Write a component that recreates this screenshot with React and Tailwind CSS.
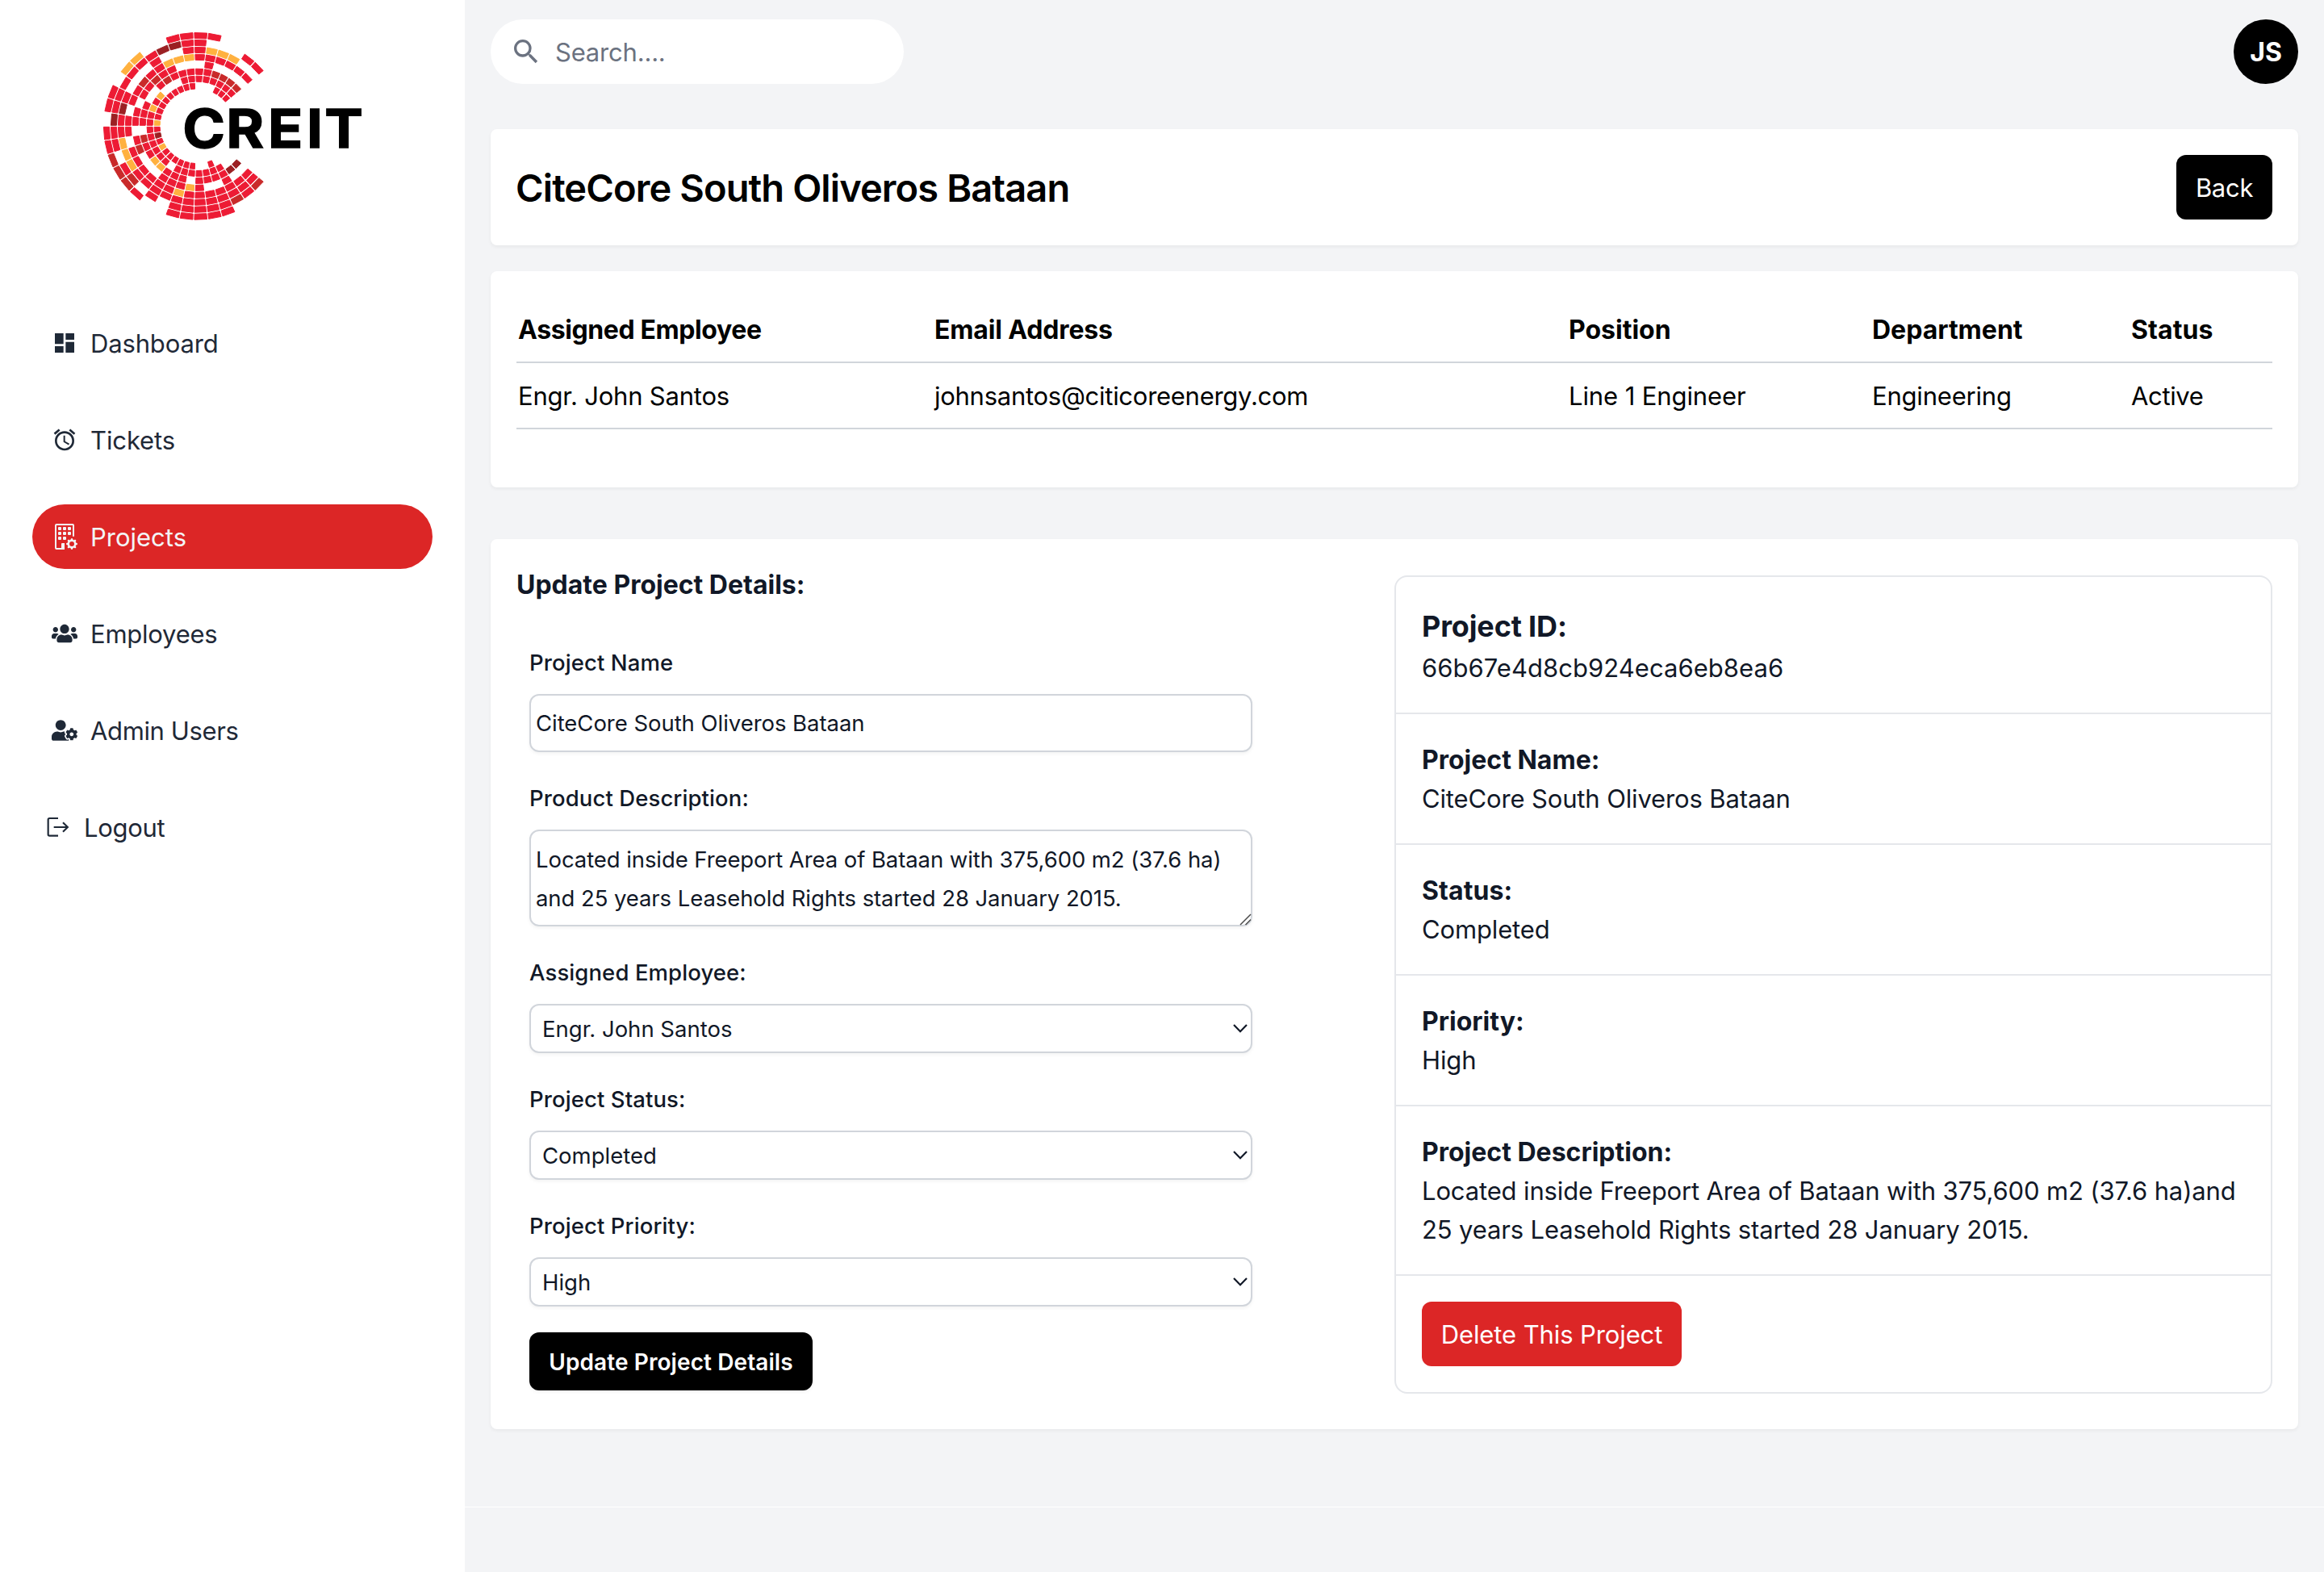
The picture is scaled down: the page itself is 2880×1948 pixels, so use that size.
import React from "react";
import { MdDashboard, MdAlarm, MdSearch } from "react-icons/md";
import { BsBuildingGear } from "react-icons/bs";
import { FaUsers, FaUserCog } from "react-icons/fa";

/* Logo mosaic: each string is one sector, outermost ring first.
   R red, D dark red, X maroon, Y amber, . empty */
const SECTORS_UP = [
  ".XRRRRRY", "RRX.RRRR", "RRRR.RYR", ".R.RR.RR", "YR.DR.YR", "YR.RDR.R", ".RRRRD.R", ".X.YRR.R",
  "RX.Y.RRR", "RRRY.RRR", "RRRR.RR.", "R.YRRRR.", "..YR.DR.", "..YR.DRR", ".R.R.DRR", ".R.R.DRR",
];
const SECTORS_DOWN = [
  "RRRR..RR", "RRY.RDRX", "D.YRDRRR", "DRYR.RRY", "DDRR.YRR", "R.RR.YRR", ".RRRRR.R", "..RRRRRR",
  "RRRYRRRR", "RRRRY.RR", "RRRRRRR.", "RRRR.RR.", "RRRR.RRR", ".DRRRRR.", ".RRR.X..", ".DRR.X..",
];
const FILL = { R: "#ed1b34", D: "#c92a2a", X: "#9b2023", Y: "#ffb13f" };
const CX = 433;
const CY = 409;
const STEP = (2 * Math.PI) / 41;

function tile(k, ring, dir) {
  const outer = 347.7 - ring * 26.85;
  const inner = outer - 21;
  const gap = 3;
  const pt = (r, edge) => {
    const a = edge === 0 ? k * STEP + gap / r : (k + 1) * STEP - gap / r;
    return `${(CX - r * Math.cos(a)).toFixed(1)} ${(CY - dir * r * Math.sin(a)).toFixed(1)}`;
  };
  return `M${pt(outer, 0)}L${pt(outer, 1)}L${pt(inner, 1)}L${pt(inner, 0)}Z`;
}

function tiles(sectors, dir) {
  return sectors.flatMap((s, k) =>
    [...s].map((c, ring) =>
      c === "." ? null : (
        <path key={`${dir}-${k}-${ring}`} d={tile(k, ring, dir)} fill={FILL[c]} stroke={FILL[c]} strokeWidth="3" strokeLinejoin="round" />
      )
    )
  );
}

function Logo() {
  return (
    <svg viewBox="84 60 957 699" className="h-[233px] w-[319px] overflow-visible">
      {tiles(SECTORS_UP, 1)}
      {tiles(SECTORS_DOWN, -1)}
      <text
        transform="scale(1.07 1)"
        x="354.2 505.6 650.5 785 847.6"
        y="489.5"
        fontFamily="Inter"
        fontWeight="700"
        fontSize="200"
        fill="#000"
        stroke="#000"
        strokeWidth="4"
      >
        CREIT
      </text>
    </svg>
  );
}

function LogoutIcon({ className }) {
  return (
    <svg viewBox="-6 0 96 96" className={className} fill="none" stroke="currentColor" strokeWidth="6.5">
      <path d="M42 15H10Q5 15 5 20V75Q5 80 10 80H42" />
      <path d="M26 48H77M60 31L77.5 48L60 65" />
    </svg>
  );
}

function NavItem({ icon: Icon, label, tracking = "", active, inset = "px-6" }) {
  return (
    <a className={`flex h-20 items-center gap-4 rounded-full ${inset} text-[31px] ${active ? "bg-[#dc2626] text-[#f3f4f6]" : "text-[#1f2937]"}`}>
      <Icon className="h-8 w-8" />
      <span className={`pt-0.5 ${tracking}`}>{label}</span>
    </a>
  );
}

function Field({ label, children }) {
  return (
    <label className="flex flex-col gap-4">
      <span className="-mb-px pt-px text-[27.5px] font-medium leading-[48px] tracking-[0.1px]">{label}</span>
      {children}
    </label>
  );
}

function SelectBox({ value }) {
  return (
    <div className="flex h-[61px] items-center justify-between rounded-xl border-2 border-[#d1d5db] bg-white pl-3.5 pr-1 text-[27.5px] shadow-[0_2px_4px_rgba(0,0,0,0.05)]">
      <span className="pt-0.5">{value}</span>
      <svg viewBox="0 0 18 11" className="h-[11px] w-[18px]" fill="none" stroke="#111827" strokeWidth="2.2">
        <path d="M1 1L9 9.2L17 1" />
      </svg>
    </div>
  );
}

function DetailRow({ label, tracking = "", children }) {
  return (
    <div className="border-b-2 border-[#e5e7eb] px-8 pb-[31px] pt-[33px] leading-[48px]">
      <div className={`text-[32px] font-bold ${tracking}`}>{label}</div>
      <div className="text-[31px] tracking-[-0.14px]">{children}</div>
    </div>
  );
}

const CARD = "rounded-lg bg-white shadow-[0_2px_4px_rgba(0,0,0,0.05)]";
const COLS = "grid grid-cols-[516px_786px_376px_321px_177px] items-center border-b-2 border-[#d1d5db] h-[82px] pt-0.5";

export default function App() {
  return (
    <div className="flex h-[1948px] w-[2880px] overflow-hidden bg-white font-['Inter',sans-serif] text-black">
      <aside className="flex w-[576px] shrink-0 flex-col pt-10">
        <div className="pl-32">
          <Logo />
        </div>
        <nav className="mt-[112px] flex flex-col gap-10 px-10">
          <NavItem icon={MdDashboard} label="Dashboard" tracking="tracking-[-0.15px]" />
          <NavItem icon={MdAlarm} label="Tickets" tracking="tracking-[-0.11px]" />
          <NavItem icon={BsBuildingGear} label="Projects" active />
          <NavItem icon={FaUsers} label="Employees" tracking="tracking-[-0.24px]" />
          <NavItem icon={FaUserCog} label="Admin Users" tracking="tracking-[-0.37px]" />
          <NavItem icon={LogoutIcon} label="Logout" tracking="tracking-[-0.3px]" inset="px-4" />
        </nav>
      </aside>

      <main className="flex flex-1 flex-col bg-[#f3f4f6]">
        <div className="flex h-[1867px] flex-col px-8 pt-6">
          <header className="flex items-center justify-between">
            <div className="flex h-20 w-[512px] items-center gap-4 rounded-full bg-white px-6 text-[#6b7280]">
              <MdSearch className="h-10 w-10" />
              <span className="pt-0.5 text-[31px] tracking-[-0.2px]">Search....</span>
            </div>
            <div className="flex h-20 w-20 items-center justify-center rounded-full bg-black pt-0.5 text-[32px] font-bold text-white">JS</div>
          </header>

          <section className={`mt-14 flex h-36 items-center justify-between px-8 ${CARD}`}>
            <h1 className="-ml-px pt-0.5 text-[47px] font-semibold tracking-[-0.9px]">CiteCore South Oliveros Bataan</h1>
            <button className="h-20 w-[119px] rounded-xl bg-black pt-0.5 text-[31px] tracking-[-0.3px] text-white">Back</button>
          </section>

          <section className={`mt-8 h-[268px] p-8 ${CARD}`}>
            <div className={`${COLS} text-[32px] font-bold`}>
              <span className="pl-0.5 tracking-[-0.4px]">Assigned Employee</span>
              <span className="pl-0.5 tracking-[-0.15px]">Email Address</span>
              <span className="pl-0.5">Position</span>
              <span className="pl-0.5">Department</span>
              <span className="pl-0.5 tracking-[0.1px]">Status</span>
            </div>
            <div className={`${COLS} text-[31px]`}>
              <span className="pl-0.5 tracking-[-0.2px]">Engr. John Santos</span>
              <span className="pl-0.5 tracking-[-0.27px]">johnsantos@citicoreenergy.com</span>
              <span className="pl-0.5 tracking-[-0.1px]">Line 1 Engineer</span>
              <span className="pl-0.5 tracking-[-0.2px]">Engineering</span>
              <span className="pl-0.5 tracking-[-0.35px]">Active</span>
            </div>
          </section>

          <section className={`mt-16 grid h-[1103px] grid-cols-2 p-8 text-[#111827] ${CARD}`}>
            <div>
              <h2 className="-mb-px pt-px text-[32px] font-bold leading-[48px]">Update Project Details:</h2>
              <form className="ml-4 mt-12 flex w-[896px] flex-col gap-8">
                <Field label="Project Name">
                  <div className="flex h-[72px] items-center rounded-xl border-2 border-[#d1d5db] pl-1.5 pt-0.5 text-[27.5px] tracking-[-0.04px] shadow-[0_2px_4px_rgba(0,0,0,0.05)]">
                    CiteCore South Oliveros Bataan
                  </div>
                </Field>
                <Field label="Product Description:">
                  <div className="relative h-[120px] rounded-xl border-2 border-[#d1d5db] pl-1.5 pt-[11px] text-[27.5px] leading-[48px] tracking-[-0.08px] shadow-[0_2px_4px_rgba(0,0,0,0.05)]">
                    Located inside Freeport Area of Bataan with 375,600 m2 (37.6 ha)
                    <br />
                    and 25 years Leasehold Rights started 28 January 2015.
                    <svg viewBox="0 0 16 16" className="absolute -bottom-px -right-px h-4 w-4" fill="none" stroke="#4b4b4b" strokeWidth="1.5">
                      <path d="M2 15L15 2M8.5 15L15 8.5" />
                    </svg>
                  </div>
                </Field>
                <Field label="Assigned Employee:">
                  <SelectBox value="Engr. John Santos" />
                </Field>
                <Field label="Project Status:">
                  <SelectBox value="Completed" />
                </Field>
                <Field label="Project Priority:">
                  <SelectBox value="High" />
                </Field>
                <button type="button" className="h-[72px] w-[351px] rounded-xl bg-black pt-0.5 text-[28px] font-semibold tracking-[0.09px] text-white shadow-[0_2px_4px_rgba(0,0,0,0.05)]">
                  Update Project Details
                </button>
              </form>
            </div>

            <div className="mt-[13px] h-[1014px] rounded-2xl border-2 border-[#e5e7eb]">
              <div className="border-b-2 border-[#e5e7eb] px-8 pb-[31px] pt-[33px]">
                <div className="text-[36px] font-bold leading-[56px] tracking-[-0.15px]">Project ID:</div>
                <div className="text-[31px] leading-[48px] tracking-[0.04px]">66b67e4d8cb924eca6eb8ea6</div>
              </div>
              <DetailRow label="Project Name:">CiteCore South Oliveros Bataan</DetailRow>
              <DetailRow label="Status:" tracking="tracking-[0.1px]">Completed</DetailRow>
              <DetailRow label="Priority:">High</DetailRow>
              <DetailRow label="Project Description:">
                Located inside Freeport Area of Bataan with 375,600 m2 (37.6 ha)and 25 years Leasehold Rights started 28 January 2015.
              </DetailRow>
              <div className="p-8">
                <button className="h-20 w-[322px] rounded-xl bg-[#dc2626] pt-0.5 text-[31px] tracking-[-0.11px] text-white">Delete This Project</button>
              </div>
            </div>
          </section>
        </div>
        <div className="h-px bg-white" />
      </main>
    </div>
  );
}
